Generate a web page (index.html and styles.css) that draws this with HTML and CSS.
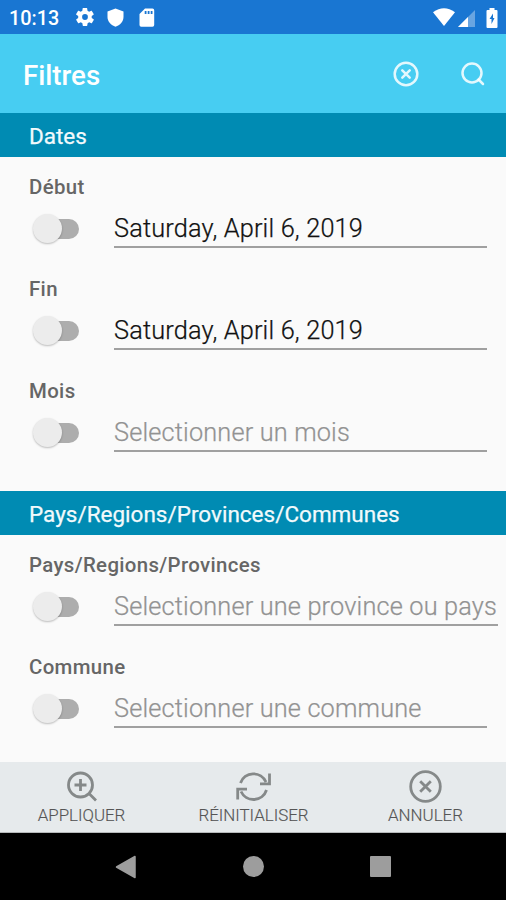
FILE: index.html
```html
<!DOCTYPE html>
<html lang="fr">
<head>
<meta charset="utf-8">
<meta name="viewport" content="width=device-width">
<title>Filtres</title>
<link rel="stylesheet" href="styles.css">
</head>
<body>
<div class="screen">
  <header class="status">
    <span class="clock">10:13</span>
    <svg class="gear" width="18" height="18" viewBox="2 2 20 20"><path fill="#fff" d="M19.400 13c0-.3.1-.6.1-1s0-.7-.1-1l2.100-1.600c.2-.2.2-.4.1-.6l-2-3.500c-.1-.2-.4-.3-.6-.2l-2.500 1c-.5-.4-1.100-.7-1.700-1l-.4-2.600c0-.2-.2-.4-.5-.4h-4c-.2 0-.4.2-.5.4l-.4 2.600c-.6.3-1.200.6-1.700 1l-2.500-1c-.2-.1-.5 0-.6.2l-2 3.500c-.1.2-.1.500.1.600L4.500 11c0 .3-.1.600-.1 1s0 .7.100 1l-2.100 1.600c-.2.200-.2.400-.1.600l2 3.500c.1.200.400.300.600.200l2.500-1c.5.400 1.100.700 1.700 1l.4 2.600c0 .2.200.4.500.4h4c.2 0 .5-.2.500-.4l.4-2.600c.6-.3 1.200-.6 1.700-1l2.500 1c.2.100.500 0 .6-.200l2-3.500c.1-.200.1-.500-.1-.600zM12 15.200a3.200 3.200 0 1 1 0-6.400 3.200 3.200 0 0 1 0 6.400z"/></svg>
    <svg class="shield" width="17" height="19" viewBox="0 0 17 19"><path fill="#fff" d="M8.500.5 16.500 3.500V9c0 4.500-3.500 8.200-8 9.700C4 17.200.5 13.500.5 9V3.500z"/></svg>
    <svg class="card" width="16" height="19" viewBox="0 0 16 19"><path fill="#fff" fill-rule="evenodd" d="M6 .5h7.500q1.700 0 1.700 1.700v14.800q0 1.700-1.700 1.700H2.200Q.5 18.700.5 17V6zM5.700 3v3h1.800V3zm3 0v3h1.800V3zm3 0v3h1.800V3z"/></svg>
    <span class="grow"></span>
    <svg class="wifi" width="22" height="18" viewBox="0 0 22 18"><path fill="#fff" d="M0 4.300Q11-3.700 22 4.300L11 18z"/></svg>
    <svg class="signal" width="17" height="17" viewBox="0 0 17 17"><path fill="#fff" fill-opacity=".35" d="M17 0v17H0z"/><path fill="#fff" d="M10 7V17H0z"/></svg>
    <svg class="battery" width="12" height="20" viewBox="0 0 12 20"><path fill="#fff" fill-rule="evenodd" d="M3.500 0h5v2h2q1 0 1 1v16q0 1-1 1h-9q-1 0-1-1V3q0-1 1-1h2zM7 5.500 3.500 11h2v5L8.500 10H7z"/></svg>
  </header>
  <div class="appbar">
    <h1>Filtres</h1>
    <svg class="clear" width="26" height="26" viewBox="0 0 26 26"><circle cx="13" cy="13" r="11.300"/><path d="m9.300 9.300 7.400 7.400m0-7.400-7.400 7.400"/></svg>
    <svg class="search" width="24" height="24" viewBox="0 0 24 24"><circle cx="11" cy="11" r="9.500"/><path d="m17.500 17.500 4.500 4.500"/></svg>
  </div>
  <main>
    <h2>Dates</h2>
    <section class="dates">
      <div class="row"><label>Début</label><div class="line"><span class="switch"></span><span class="field filled">Saturday, April 6, 2019</span></div></div>
      <div class="row"><label>Fin</label><div class="line"><span class="switch"></span><span class="field filled">Saturday, April 6, 2019</span></div></div>
      <div class="row"><label>Mois</label><div class="line"><span class="switch"></span><span class="field">Selectionner un mois</span></div></div>
    </section>
    <h2>Pays/Regions/Provinces/Communes</h2>
    <section>
      <div class="row"><label>Pays/Regions/Provinces</label><div class="line"><span class="switch"></span><span class="field wide">Selectionner une province ou pays</span></div></div>
      <div class="row"><label>Commune</label><div class="line"><span class="switch"></span><span class="field">Selectionner une commune</span></div></div>
    </section>
  </main>
  <div class="actions">
    <div class="action"><svg width="34" height="34" viewBox="0 0 34 34"><circle cx="15.500" cy="15" r="12"/><path d="m24 23.500 7 7M15.500 9v12M9.500 15h12"/></svg><span>APPLIQUER</span></div>
    <div class="action"><svg width="36" height="34" viewBox="0 0 36 34"><path d="M4.500 13A13.700 13.700 0 0 1 30 12M33.500 3.500v10.300H24M30.500 20A13.700 13.700 0 0 1 5 21.500M1.700 29.500V19.200H11"/></svg><span>RÉINITIALISER</span></div>
    <div class="action"><svg width="34" height="34" viewBox="0 0 34 34"><circle cx="16.500" cy="16.500" r="14.800"/><path d="m11.200 11.200 10.600 10.600m0-10.600-10.600 10.600"/></svg><span>ANNULER</span></div>
  </div>
  <nav>
    <svg width="22" height="24" viewBox="0 0 22 24"><path d="M21 1.500v21L2.500 12z" stroke="#9d9d9d" stroke-width="1.500" stroke-linejoin="round" fill="#9d9d9d"/></svg>
    <span class="home"></span>
    <span class="recent"></span>
  </nav>
</div>
</body>
</html>
```
FILE: styles.css
```css
* { box-sizing: border-box; }
body { margin: 0; font-family: Roboto, "Liberation Sans", sans-serif; }
.screen { width: 506px; height: 900px; overflow: hidden; display: flex; flex-direction: column; background: #fafafa; }
svg { display: block; flex: none; }
.grow { flex: 1; }

.status { height: 34px; flex: none; display: flex; align-items: center; background: #1976d2; color: #fff; padding: 0 8px 0 9px; }
.clock { font-size: 19.800px; font-weight: 500; width: 67px; padding-top: 3px; }
.shield { margin-left: 13px; }
.card { margin-left: 15px; }
.wifi { margin-top: -1px; }
.signal { margin: 2px 0 0 3px; }
.battery { margin: 1px 0 0 11px; }

.appbar { height: 79px; flex: none; display: flex; align-items: center; background: #47cdf2; padding: 0 21px 0 23px; }
h1 { margin: 0; flex: 1; color: #fff; font-size: 27.700px; font-weight: 500; line-height: 32px; padding-top: 4px; }
.appbar svg { fill: none; stroke: #fff; stroke-opacity: .85; stroke-width: 2.500; stroke-linecap: round; }
.search { margin-left: 42px; }

main { height: 649px; flex: none; }
h2 { margin: 0; height: 44px; padding: 2px 29px 0; background: #008bb3; color: #f2fafc; font-size: 22.500px; font-weight: 400; line-height: 43px; -webkit-text-stroke: .25px #f2fafc; }
.dates { height: 334px; }
.row { height: 101.800px; padding: 18px 0 0 29px; }
label { display: block; font-size: 20.400px; line-height: 24px; font-weight: 500; letter-spacing: .35px; color: #666; }
.line { display: flex; align-items: center; height: 49px; }
.switch { position: relative; width: 46px; height: 20px; margin: 11px 35px 0 4px; flex: none; border-radius: 10px; background: linear-gradient(90deg, transparent 20px, #adadad 20px); }
.switch::before { content: ""; position: absolute; left: 0; top: -5px; width: 29px; height: 29px; border-radius: 50%; background: #ececec; box-shadow: 0 1px 2px rgba(0,0,0,.25); }
.field { width: 373px; height: 49px; border-bottom: 2px solid #a0a0a0; padding-top: 14px; font-size: 25.300px; font-weight: 300; letter-spacing: .17px; line-height: 32px; color: #929292; -webkit-text-stroke: .25px currentColor; white-space: nowrap; }
.filled { color: #111; }
.wide { width: 384px; }

.actions { height: 71px; flex: none; display: grid; grid-template-columns: repeat(3, 172px); justify-content: center; background: #e6eaec; border-bottom: 1px solid #b5b8ba; padding-left: 1px; }
.action { display: flex; flex-direction: column; align-items: center; padding-top: 8px; color: #555; font-size: 16.900px; font-weight: 300; line-height: 20px; }
.action svg { fill: none; stroke: #858989; stroke-width: 2.800; }
.action span { padding-top: 1px; -webkit-text-stroke: .15px currentColor; }
nav { flex: 1; display: flex; align-items: center; justify-content: center; background: #000; padding-right: 2px; }
.home { width: 21px; height: 21px; border-radius: 50%; background: #9d9d9d; margin: 0 106px 0 107px; }
.recent { width: 21px; height: 21px; border-radius: 1px; background: #9d9d9d; }
```
